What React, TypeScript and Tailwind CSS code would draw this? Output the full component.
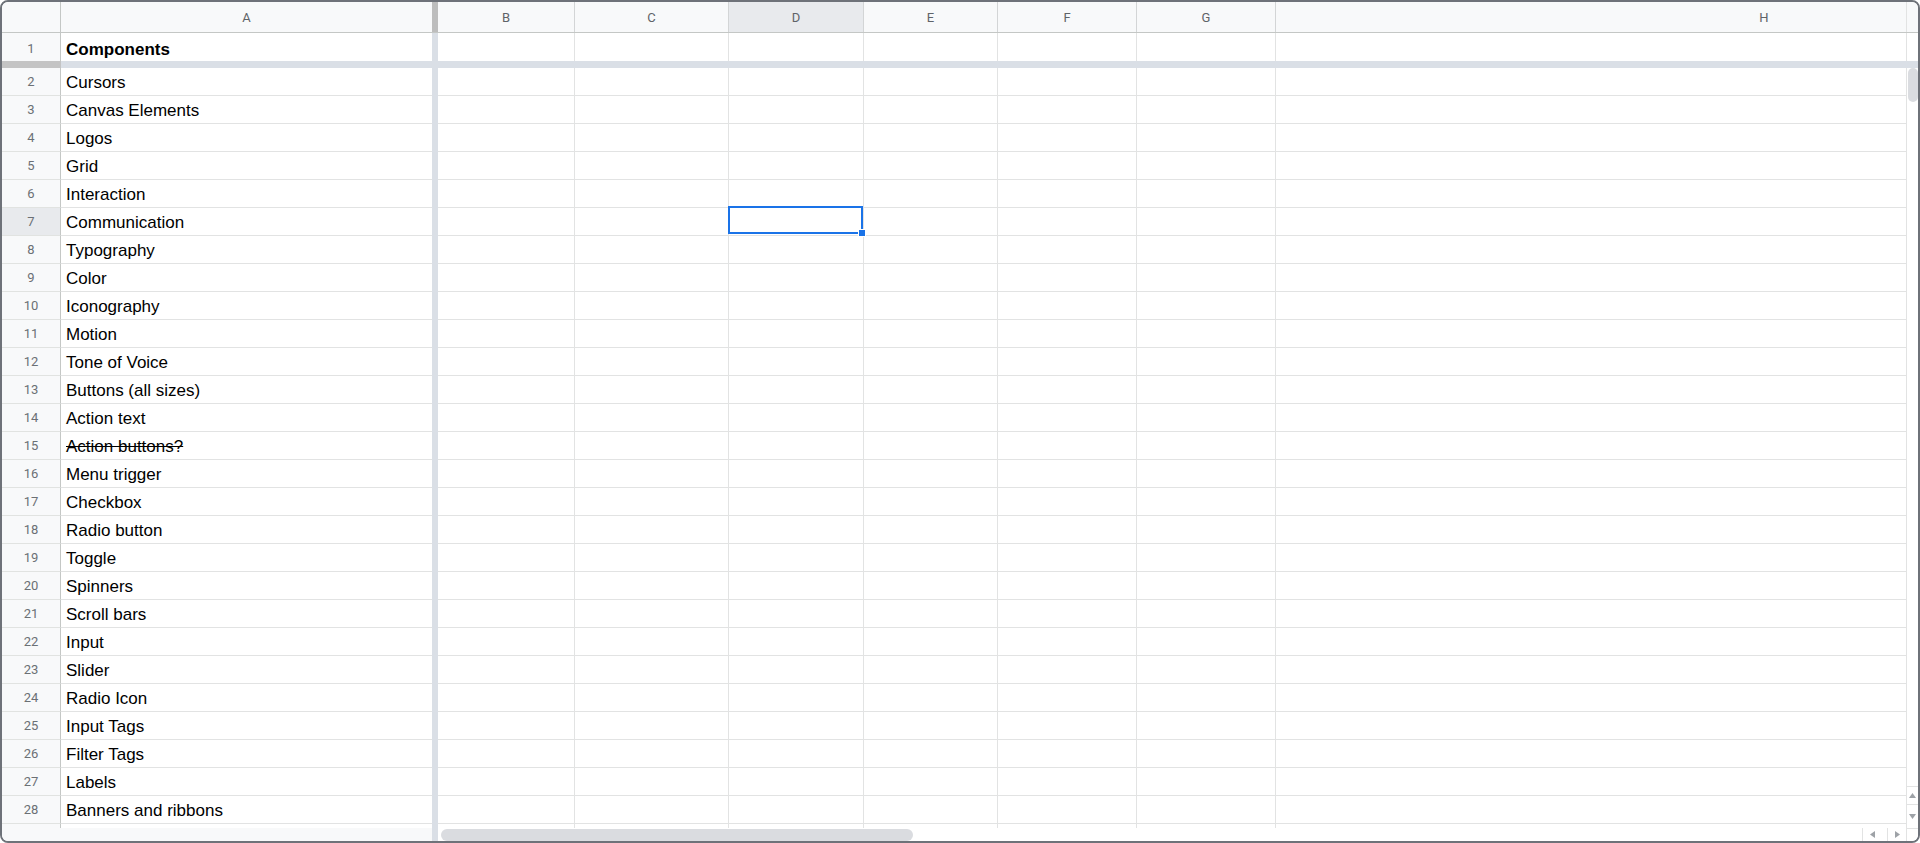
import React from "react";

const ROWS = [
  "Cursors",
  "Canvas Elements",
  "Logos",
  "Grid",
  "Interaction",
  "Communication",
  "Typography",
  "Color",
  "Iconography",
  "Motion",
  "Tone of Voice",
  "Buttons (all sizes)",
  "Action text",
  "Action buttons?",
  "Menu trigger",
  "Checkbox",
  "Radio button",
  "Toggle",
  "Spinners",
  "Scroll bars",
  "Input",
  "Slider",
  "Radio Icon",
  "Input Tags",
  "Filter Tags",
  "Labels",
  "Banners and ribbons",
];

const COLS = [
  { k: "B", w: "w-[137px]" },
  { k: "C", w: "w-[154px]" },
  { k: "D", w: "w-[135px]" },
  { k: "E", w: "w-[134px]" },
  { k: "F", w: "w-[139px]" },
  { k: "G", w: "w-[139px]" },
];

function Tri({ dir }: { dir: "up" | "down" | "left" | "right" }) {
  const pts =
    dir === "up"
      ? "0,5 7,5 3.5,0"
      : dir === "down"
      ? "0,0 7,0 3.5,5"
      : dir === "left"
      ? "5,0 5,7 0,3.5"
      : "0,0 0,7 5,3.5";
  const w = dir === "up" || dir === "down" ? 7 : 5;
  const h = dir === "up" || dir === "down" ? 5 : 7;
  return (
    <svg width={w} height={h} viewBox={`0 0 ${w} ${h}`}>
      <polygon points={pts} fill="#9ea2a7" />
    </svg>
  );
}

function DataRow({ n, text, partial }: { n: number; text?: string; partial?: boolean }) {
  const sel = n === 7;
  const rowB = partial ? "" : "border-b";
  return (
    <div className={`flex shrink-0 ${partial ? "h-[4px]" : "h-[28px]"}`}>
      <div
        className={`w-[59px] shrink-0 flex items-center justify-center border-r ${rowB} border-r-[#c4c7c5] border-b-[#e1e3e1] text-[13px] text-[#6b7075] font-['Roboto',Arial,sans-serif] ${
          partial ? "" : "pt-[1px]"
        } ${sel ? "bg-[#e8eaed]" : "bg-[#f8f9fa]"}`}
      >
        {partial ? null : n}
      </div>
      <div
        className={`w-[371px] shrink-0 flex items-center px-[5px] ${rowB} ${
          partial ? "" : "pt-[2px]"
        } border-[#e2e3e3] text-[17px] text-black whitespace-nowrap overflow-hidden`}
      >
        {text === "Action buttons?" ? <span className="line-through">{text}</span> : text}
      </div>
      <div className="w-[6px] shrink-0 bg-[#dadfe6]" />
      {COLS.map((c) => (
        <div key={c.k} className={`${c.w} shrink-0 border-r ${rowB} border-[#e2e3e3] relative`}>
          {sel && c.k === "D" ? (
            <div className="absolute -top-[2px] -left-[1px] w-[135px] h-[28px] border-2 border-[#1a73e8] z-10">
              <div className="absolute -right-[5px] -bottom-[5px] w-[8px] h-[8px] bg-[#1a73e8] border border-white" />
            </div>
          ) : null}
        </div>
      ))}
      <div className={`flex-1 ${rowB} border-[#e2e3e3]`} />
    </div>
  );
}

export default function App() {
  return (
    <div className="w-[1920px] h-[843px] bg-white font-['Liberation_Sans',Arial,sans-serif]">
      <div className="w-full h-full border-2 border-[#6e7279] rounded-[8px] overflow-hidden flex flex-col bg-white">
        {/* Column header */}
        <div className="flex h-[31px] shrink-0 border-b border-[#c4c7c5] bg-[#f8f9fa] text-[13px] text-[#5f6368] font-['Roboto',Arial,sans-serif]">
          <div className="w-[59px] shrink-0 border-r border-[#c4c7c5]" />
          <div className="w-[371px] shrink-0 flex items-center justify-center pt-[2px]">A</div>
          <div className="w-[6px] shrink-0 bg-[#bdbdbd]" />
          {COLS.map((c) => (
            <div
              key={c.k}
              className={`${c.w} shrink-0 flex items-center justify-center pt-[2px] border-r border-[#d3d5d6] ${
                c.k === "D" ? "bg-[#e8eaed]" : ""
              }`}
            >
              {c.k}
            </div>
          ))}
          <div className="flex-1 overflow-hidden flex">
            <div className="w-[976px] shrink-0 flex items-center justify-center pt-[2px]">H</div>
          </div>
          <div className="w-[12px] shrink-0 border-l border-[#e2e3e3]" />
        </div>

        {/* Row 1 */}
        <div className="flex h-[28px] shrink-0">
          <div className="w-[59px] shrink-0 flex items-center justify-center pt-[3px] border-r border-[#c4c7c5] bg-[#f8f9fa] text-[13px] text-[#6b7075] font-['Roboto',Arial,sans-serif]">
            1
          </div>
          <div className="w-[371px] shrink-0 flex items-center px-[5px] pt-[5px] text-[17px] font-bold text-black">
            Components
          </div>
          <div className="w-[6px] shrink-0 bg-[#dadfe6]" />
          {COLS.map((c) => (
            <div key={c.k} className={`${c.w} shrink-0 border-r border-[#e2e3e3]`} />
          ))}
          <div className="flex-1" />
          <div className="w-[12px] shrink-0 border-l border-[#e2e3e3]" />
        </div>

        {/* Freeze bar */}
        <div className="flex h-[7px] shrink-0">
          <div className="w-[59px] shrink-0 bg-[#c4c4c4]" />
          <div className="flex-1 bg-[#dadfe6]" />
        </div>

        {/* Main area */}
        <div className="flex flex-1 min-h-0">
          <div className="flex-1 flex flex-col min-w-0">
            {ROWS.map((t, i) => (
              <DataRow key={i} n={i + 2} text={t} />
            ))}
            <DataRow n={29} partial />
            <div className="flex h-[13px] shrink-0">
              <div className="w-[430px] shrink-0 bg-[#f8f9fa]" />
              <div className="w-[6px] shrink-0 bg-[#dadfe6]" />
              <div className="flex-1 bg-white flex items-center">
                <div className="ml-[3px] w-[472px] h-[12px] rounded-full bg-[#dadce0]" />
              </div>
              <div className="w-[25px] shrink-0 border-l border-[#e2e3e3] flex items-center justify-center pr-[6px]">
                <Tri dir="left" />
              </div>
              <div className="w-[19px] shrink-0 border-l border-[#e2e3e3] flex items-center justify-center">
                <Tri dir="right" />
              </div>
            </div>
          </div>
          <div className="w-[12px] shrink-0 border-l border-[#e2e3e3] flex flex-col bg-white">
            <div className="ml-[1px] w-[10px] h-[34px] rounded-[5px] bg-[#dadce0]" />
            <div className="flex-1" />
            <div className="h-[18px] border-t border-[#e2e3e3] flex items-center justify-center">
              <Tri dir="up" />
            </div>
            <div className="h-[24px] border-t border-[#e2e3e3] flex items-center justify-center">
              <Tri dir="down" />
            </div>
            <div className="h-[13px] border-t border-[#e2e3e3]" />
          </div>
        </div>
      </div>
    </div>
  );
}
